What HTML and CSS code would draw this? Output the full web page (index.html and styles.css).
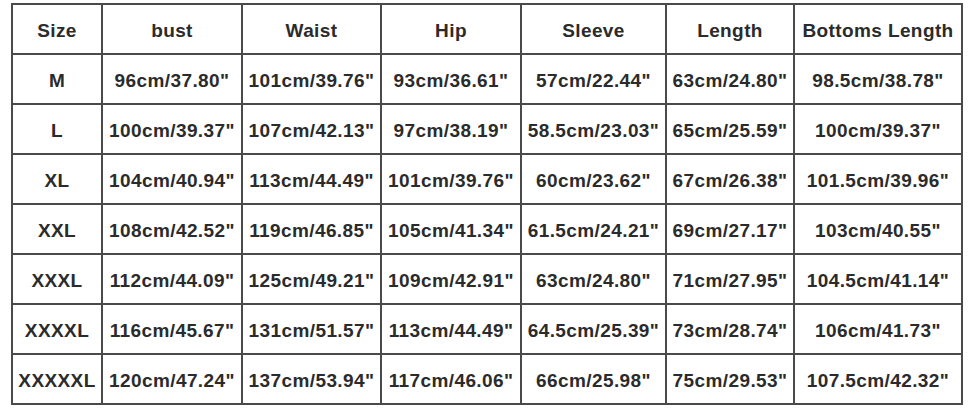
FILE: index.html
```html
<!DOCTYPE html>
<html>
<head>
<meta charset="utf-8">
<link rel="stylesheet" href="styles.css">
</head>
<body>
<table class="size-table">
<colgroup>
<col class="c-size"><col class="c-bust"><col class="c-waist"><col class="c-hip"><col class="c-sleeve"><col class="c-length"><col class="c-bottoms">
</colgroup>
<thead>
<tr><th>Size</th><th>bust</th><th>Waist</th><th>Hip</th><th>Sleeve</th><th>Length</th><th>Bottoms Length</th></tr>
</thead>
<tbody>
<tr><td>M</td><td>96cm/37.80"</td><td>101cm/39.76"</td><td>93cm/36.61"</td><td>57cm/22.44"</td><td>63cm/24.80"</td><td>98.5cm/38.78"</td></tr>
<tr><td>L</td><td>100cm/39.37"</td><td>107cm/42.13"</td><td>97cm/38.19"</td><td>58.5cm/23.03"</td><td>65cm/25.59"</td><td>100cm/39.37"</td></tr>
<tr><td>XL</td><td>104cm/40.94"</td><td>113cm/44.49"</td><td>101cm/39.76"</td><td>60cm/23.62"</td><td>67cm/26.38"</td><td>101.5cm/39.96"</td></tr>
<tr><td>XXL</td><td>108cm/42.52"</td><td>119cm/46.85"</td><td>105cm/41.34"</td><td>61.5cm/24.21"</td><td>69cm/27.17"</td><td>103cm/40.55"</td></tr>
<tr><td>XXXL</td><td>112cm/44.09"</td><td>125cm/49.21"</td><td>109cm/42.91"</td><td>63cm/24.80"</td><td>71cm/27.95"</td><td>104.5cm/41.14"</td></tr>
<tr><td>XXXXL</td><td>116cm/45.67"</td><td>131cm/51.57"</td><td>113cm/44.49"</td><td>64.5cm/25.39"</td><td>73cm/28.74"</td><td>106cm/41.73"</td></tr>
<tr><td>XXXXXL</td><td>120cm/47.24"</td><td>137cm/53.94"</td><td>117cm/46.06"</td><td>66cm/25.98"</td><td>75cm/29.53"</td><td>107.5cm/42.32"</td></tr>
</tbody>
</table>
</body>
</html>
```
FILE: styles.css
```css
html, body {
  margin: 0;
  padding: 0;
  background: #ffffff;
}
body {
  padding: 3px 0 0 11px;
  font-family: "Liberation Sans", Arial, sans-serif;
}
.size-table {
  border-collapse: collapse;
  table-layout: fixed;
  width: 950px;
  color: #2b2b2b;
}
.size-table th,
.size-table td {
  border: 2px solid #4a4a4a;
  height: 45px;
  padding: 3px 0 0 0;
  text-align: center;
  vertical-align: middle;
  font-size: 19px;
  font-weight: bold;
  letter-spacing: 0.4px;
  white-space: nowrap;
  overflow: hidden;
}
.c-size { width: 90px; }
.c-bust { width: 140px; }
.c-waist { width: 139px; }
.c-hip { width: 140px; }
.c-sleeve { width: 145px; }
.c-length { width: 128px; }
.c-bottoms { width: 168px; }
```
